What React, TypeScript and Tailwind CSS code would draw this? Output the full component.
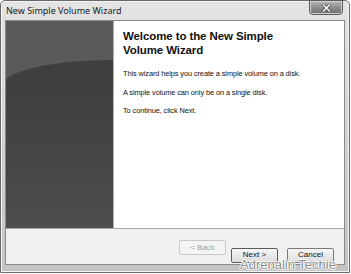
import React from 'react';

const WizardButton: React.FC<{ label: string; disabled?: boolean; focused?: boolean }> = ({ label, disabled, focused }) => (
  <button
    className={
      'h-[15px] w-[47px] rounded-[2px] border text-[8px] leading-none ' +
      (disabled
        ? 'border-[#c9c9c9] bg-[#f4f4f4] text-[#a0a0a0]'
        : focused
          ? 'border-[#5a5a5a] bg-gradient-to-b from-[#f6f6f6] to-[#dcdcdc] text-[#111]'
          : 'border-[#7a7a7a] bg-gradient-to-b from-[#f6f6f6] to-[#dcdcdc] text-[#111]')
    }
  >
    {label}
  </button>
);

export default function App() {
  return (
    <div className="relative h-[274px] w-[351px] overflow-hidden bg-white" style={{ fontFamily: '"Liberation Sans", Arial, sans-serif' }}>
      {/* window frame */}
      <div className="flex h-[273px] w-[350px] flex-col rounded-t-[5px] border border-[#6a6a6a] bg-gradient-to-b from-[#e4e4e4] via-[#d2d2d2] to-[#c4c4c4] shadow-[inset_0_0_0_1px_#f4f4f4]">
        {/* title bar */}
        <div className="relative flex h-[19px] items-center pl-[5px]">
          <span className="text-[9px] text-[#1a1a1a]" style={{ fontFamily: '"Noto Sans", "Liberation Sans", sans-serif' }}>
            New Simple Volume Wizard
          </span>
          <div className="absolute right-[6px] top-[-1px] flex h-[15px] w-[34px] items-center justify-center rounded-b-[4px] border border-[#5c5c5c] bg-gradient-to-b from-[#b8b8b8] via-[#8e8e8e] to-[#6e6e6e] shadow-[inset_0_0_0_1px_#d0d0d0]">
            <svg width="9" height="8" viewBox="0 0 9 8">
              <path d="M1.5 1 L7.5 7 M7.5 1 L1.5 7" stroke="#3a3a3a" strokeWidth="3" strokeLinecap="square" />
              <path d="M1.5 1 L7.5 7 M7.5 1 L1.5 7" stroke="#ffffff" strokeWidth="1.6" strokeLinecap="square" />
            </svg>
          </div>
        </div>

        {/* client area */}
        <div className="mx-[4px] flex h-[245px] flex-col border border-[#8a8a8a] bg-[#f0f0f0]">
          <div className="flex h-[212px]">
            {/* side banner */}
            <div className="relative w-[107px] overflow-hidden">
              <svg className="absolute left-0 top-0" width="107" height="212" viewBox="0 0 107 212" preserveAspectRatio="none">
                <defs>
                  <linearGradient id="bg" x1="0" y1="0" x2="0" y2="1">
                    <stop offset="0" stopColor="#3e3e3e" />
                    <stop offset="0.5" stopColor="#444444" />
                    <stop offset="1" stopColor="#4e4e4e" />
                  </linearGradient>
                </defs>
                <rect width="107" height="212" fill="#5a5a5a" />
                <path d="M0 58 Q25 40 107 39 L107 212 L0 212 Z" fill="url(#bg)" />
              </svg>
            </div>
            <div className="w-px bg-[#b0b0b0]" />
            {/* content */}
            <div className="flex-1 bg-white pl-[9px] pt-[8px] text-[#111]">
              <h1 className="text-[11.5px] font-bold leading-[14px] tracking-[-0.1px]" style={{ fontFamily: '"Liberation Sans", Arial, sans-serif' }}>
                Welcome to the New Simple
                <br />
                Volume Wizard
              </h1>
              <p className="mt-[12px] text-[7.4px] leading-[10px] tracking-[-0.1px]">This wizard helps you create a simple volume on a disk.</p>
              <p className="mt-[9px] text-[7.4px] leading-[10px] tracking-[-0.1px]">A simple volume can only be on a single disk.</p>
              <p className="mt-[8px] text-[7.4px] leading-[10px] tracking-[-0.1px]">To continue, click Next.</p>
            </div>
          </div>
          <div className="h-px bg-[#a8a8a8]" />
          {/* button bar */}
          <div className="flex flex-1 items-start justify-end pr-[10px] pt-[11px]">
            <WizardButton label="< Back" disabled />
            <div className="ml-[5px]">
              <WizardButton label="Next >" focused />
            </div>
            <div className="ml-[9px]">
              <WizardButton label="Cancel" />
            </div>
          </div>
        </div>
      </div>

      {/* watermark */}
      <span
        className="absolute left-[240px] top-[258px] text-[13px] leading-none text-[#8c8c8c]"
        style={{
          fontFamily: '"Liberation Sans", Arial, sans-serif',
          textShadow: '1px 0 0 #fff, -1px 0 0 #fff, 0 1px 0 #fff, 0 -1px 0 #fff',
        }}
      >
        Adrenalin Techie
      </span>
    </div>
  );
}
